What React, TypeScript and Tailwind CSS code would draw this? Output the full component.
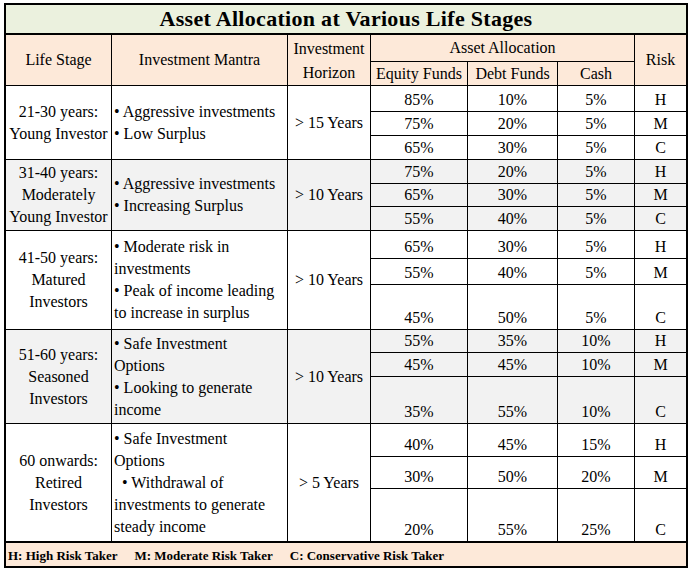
import React from "react";

type Group = {
  stage: string[];
  mantra: { text: string; indent?: boolean }[];
  horizon: string;
  rows: [string, string, string, string][];
  shaded?: boolean;
};

const groups: Group[] = [
  {
    stage: ["21-30 years:", "Young Investor"],
    mantra: [{ text: "• Aggressive investments" }, { text: "• Low Surplus" }],
    horizon: "> 15 Years",
    rows: [
      ["85%", "10%", "5%", "H"],
      ["75%", "20%", "5%", "M"],
      ["65%", "30%", "5%", "C"],
    ],
  },
  {
    stage: ["31-40 years:", "Moderately", "Young Investor"],
    mantra: [{ text: "• Aggressive investments" }, { text: "• Increasing Surplus" }],
    horizon: "> 10 Years",
    rows: [
      ["75%", "20%", "5%", "H"],
      ["65%", "30%", "5%", "M"],
      ["55%", "40%", "5%", "C"],
    ],
    shaded: true,
  },
  {
    stage: ["41-50 years:", "Matured", "Investors"],
    mantra: [
      { text: "• Moderate risk in" },
      { text: "investments" },
      { text: "• Peak of income leading" },
      { text: "to increase in surplus" },
    ],
    horizon: "> 10 Years",
    rows: [
      ["65%", "30%", "5%", "H"],
      ["55%", "40%", "5%", "M"],
      ["45%", "50%", "5%", "C"],
    ],
  },
  {
    stage: ["51-60 years:", "Seasoned", "Investors"],
    mantra: [
      { text: "• Safe Investment" },
      { text: "Options" },
      { text: "• Looking to generate" },
      { text: "income" },
    ],
    horizon: "> 10 Years",
    rows: [
      ["55%", "35%", "10%", "H"],
      ["45%", "45%", "10%", "M"],
      ["35%", "55%", "10%", "C"],
    ],
    shaded: true,
  },
  {
    stage: ["60 onwards:", "Retired", "Investors"],
    mantra: [
      { text: "• Safe Investment" },
      { text: "Options" },
      { text: "• Withdrawal of", indent: true },
      { text: "investments to generate" },
      { text: "steady income" },
    ],
    horizon: "> 5 Years",
    rows: [
      ["40%", "45%", "15%", "H"],
      ["30%", "50%", "20%", "M"],
      ["20%", "55%", "25%", "C"],
    ],
  },
];

function DataCell({ value, shaded }: { value: string; shaded?: boolean }) {
  return (
    <div
      className={`flex items-end justify-center pb-[2px] leading-[18px] ${
        shaded ? "bg-[#f2f2f2]" : "bg-white"
      }`}
    >
      {value}
    </div>
  );
}

export default function App() {
  return (
    <div className="min-h-[572px] w-[691px] bg-white pl-[4px] pt-[3px] font-['Liberation_Serif',serif] text-[16px] text-black">
      <div className="grid w-[684px] grid-cols-[105px_175px_82px_96px_89px_76px_51px] grid-rows-[29px_26px_23px_25px_23px_23px_23px_22px_23px_27px_25px_44px_22px_23px_46px_32px_31px_52px_24px] gap-px bg-black p-[2px]">
        {/* title */}
        <div className="col-span-7 mb-px flex items-center justify-center bg-[#ebf1de] text-[22px] font-bold leading-[28px] tracking-[0.3px]">
          Asset Allocation at Various Life Stages
        </div>

        {/* header */}
        <div className="row-span-2 flex items-center justify-center bg-[#fde9d9]">Life Stage</div>
        <div className="row-span-2 flex items-center justify-center bg-[#fde9d9]">Investment Mantra</div>
        <div className="row-span-2 flex flex-col items-center justify-center bg-[#fde9d9] pt-[2px] leading-[24px]">
          <span>Investment</span>
          <span>Horizon</span>
        </div>
        <div className="col-span-3 flex items-center justify-center bg-[#fde9d9]">Asset Allocation</div>
        <div className="row-span-2 flex items-center justify-center bg-[#fde9d9]">Risk</div>
        <div className="flex items-center justify-center whitespace-nowrap bg-[#fde9d9]">Equity Funds</div>
        <div className="flex items-center justify-center whitespace-nowrap bg-[#fde9d9]">Debt Funds</div>
        <div className="flex items-center justify-center bg-[#fde9d9]">Cash</div>

        {groups.map((g, gi) => {
          const bg = g.shaded ? "bg-[#f2f2f2]" : "bg-white";
          return (
            <React.Fragment key={gi}>
              <div className={`row-span-3 flex flex-col items-center justify-center whitespace-nowrap leading-[22px] ${bg}`}>
                {g.stage.map((s) => (
                  <span key={s}>{s}</span>
                ))}
              </div>
              <div className={`row-span-3 flex flex-col justify-center whitespace-nowrap pl-[2px] leading-[22px] ${bg}`}>
                {g.mantra.map((m) => (
                  <span key={m.text} className={m.indent ? "pl-[8px]" : ""}>
                    {m.text}
                  </span>
                ))}
              </div>
              <div className={`row-span-3 flex items-center justify-center ${bg}`}>{g.horizon}</div>
              {g.rows.map((r, ri) =>
                r.map((v, ci) => <DataCell key={`${ri}-${ci}`} value={v} shaded={g.shaded} />)
              )}
            </React.Fragment>
          );
        })}

        {/* legend */}
        <div className="col-span-7 mt-px flex items-end gap-[17px] bg-[#fde9d9] pb-[1px] pl-[2px] text-[13px] font-bold leading-[18px]">
          <span>H: High Risk Taker</span>
          <span>M: Moderate Risk Taker</span>
          <span>C: Conservative Risk Taker</span>
        </div>
      </div>
    </div>
  );
}
